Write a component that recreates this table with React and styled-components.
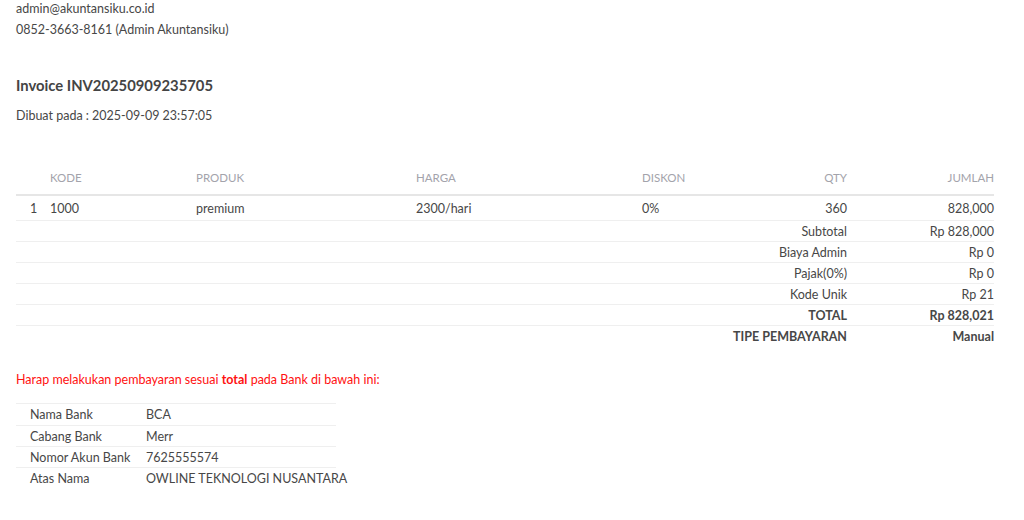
import React from 'react';
import styled, { createGlobalStyle } from 'styled-components';

const items = [
  { no: 1, kode: '1000', produk: 'premium', harga: '2300/hari', diskon: '0%', qty: '360', jumlah: '828,000' },
];

const summary = [
  { label: 'Subtotal', value: 'Rp 828,000' },
  { label: 'Biaya Admin', value: 'Rp 0' },
  { label: 'Pajak(0%)', value: 'Rp 0' },
  { label: 'Kode Unik', value: 'Rp 21' },
  { label: 'TOTAL', value: 'Rp 828,021', $bold: true },
  { label: 'TIPE PEMBAYARAN', value: 'Manual', $bold: true, $last: true },
];

const bank = [
  ['Nama Bank', 'BCA'],
  ['Cabang Bank', 'Merr'],
  ['Nomor Akun Bank', '7625555574'],
  ['Atas Nama', 'OWLINE TEKNOLOGI NUSANTARA'],
];

const App = () => {
  return (
    <>
      <GlobalStyle />
      <Page>
        <Contact>
          <div>admin@akuntansiku.co.id</div>
          <div>0852-3663-8161 (Admin Akuntansiku)</div>
        </Contact>

        <Title>Invoice INV20250909235705</Title>
        <Created>Dibuat pada : 2025-09-09 23:57:05</Created>

        <Table>
          <HeadRow>
            <Cell />
            <Cell>KODE</Cell>
            <Cell>PRODUK</Cell>
            <Cell>HARGA</Cell>
            <Cell>DISKON</Cell>
            <Cell $right>QTY</Cell>
            <Cell $right>JUMLAH</Cell>
          </HeadRow>
          {items.map((it) => (
            <ItemRow key={it.no}>
              <IndexCell>{it.no}</IndexCell>
              <Cell>{it.kode}</Cell>
              <Cell>{it.produk}</Cell>
              <Cell>{it.harga}</Cell>
              <Cell>{it.diskon}</Cell>
              <Cell $right>{it.qty}</Cell>
              <Cell $right>{it.jumlah}</Cell>
            </ItemRow>
          ))}
          {summary.map((s) => (
            <SummaryRow key={s.label} $last={s.$last} $bold={s.$bold}>
              <Cell $right>{s.label}</Cell>
              <Cell $right>{s.value}</Cell>
            </SummaryRow>
          ))}
        </Table>

        <Notice>
          Harap melakukan pembayaran sesuai <b>total</b> pada Bank di bawah ini:
        </Notice>

        <BankTable>
          {bank.map(([k, v]) => (
            <BankRow key={k}>
              <span>{k}</span>
              <span>{v}</span>
            </BankRow>
          ))}
        </BankTable>
      </Page>
    </>
  );
};

export default App;

const GlobalStyle = createGlobalStyle`
  body {
    margin: 0;
    background: #fff;
    font-family: Lato, "Open Sans", sans-serif;
    font-size: 12.5px;
    color: #474747;
  }
`;

const Page = styled.div`
  padding: 0 30px 0 16px;
  margin-top: -2px;
  line-height: 21px;
`;

const Contact = styled.div`
  display: flex;
  flex-direction: column;
`;

const Title = styled.h3`
  margin: 33px 0 0;
  font-size: 14.8px;
  font-weight: 700;
  line-height: 24px;
  color: #444;
`;

const Created = styled.div`
  margin-top: 8px;
`;

const Table = styled.div`
  margin-top: 38px;
  width: 978px;
`;

const cols = '34px 146px 220px 226px 105px 100px 147px';

const HeadRow = styled.div`
  display: grid;
  grid-template-columns: ${cols};
  align-items: center;
  padding: 3px 0 6px;
  border-bottom: 2px solid #e6e6e6;
  color: #a3a3ab;
  font-size: 11.5px;
`;

const ItemRow = styled.div`
  display: grid;
  grid-template-columns: ${cols};
  box-sizing: border-box;
  height: 25px;
  align-items: center;
  border-bottom: 1px solid #efefef;
`;

const Cell = styled.div`
  text-align: ${({ $right }) => ($right ? 'right' : 'left')};
  white-space: nowrap;
`;

const IndexCell = styled.div`
  padding-left: 14px;
`;

const SummaryRow = styled.div`
  display: grid;
  grid-template-columns: 831px 147px;
  box-sizing: border-box;
  height: 21px;
  align-items: center;
  border-bottom: ${({ $last }) => ($last ? 'none' : '1px solid #efefef')};
  font-weight: ${({ $bold }) => ($bold ? 700 : 400)};
`;

const Notice = styled.p`
  margin: 22px 0 0;
  color: #f11;
`;

const BankTable = styled.div`
  margin-top: 13px;
  width: 320px;
  border-top: 1px solid #efefef;
`;

const BankRow = styled.div`
  display: grid;
  grid-template-columns: 116px 1fr;
  box-sizing: border-box;
  height: 21px;
  align-items: center;
  padding-left: 14px;
  white-space: nowrap;
  & + & {
    border-top: 1px solid #efefef;
  }
`;
